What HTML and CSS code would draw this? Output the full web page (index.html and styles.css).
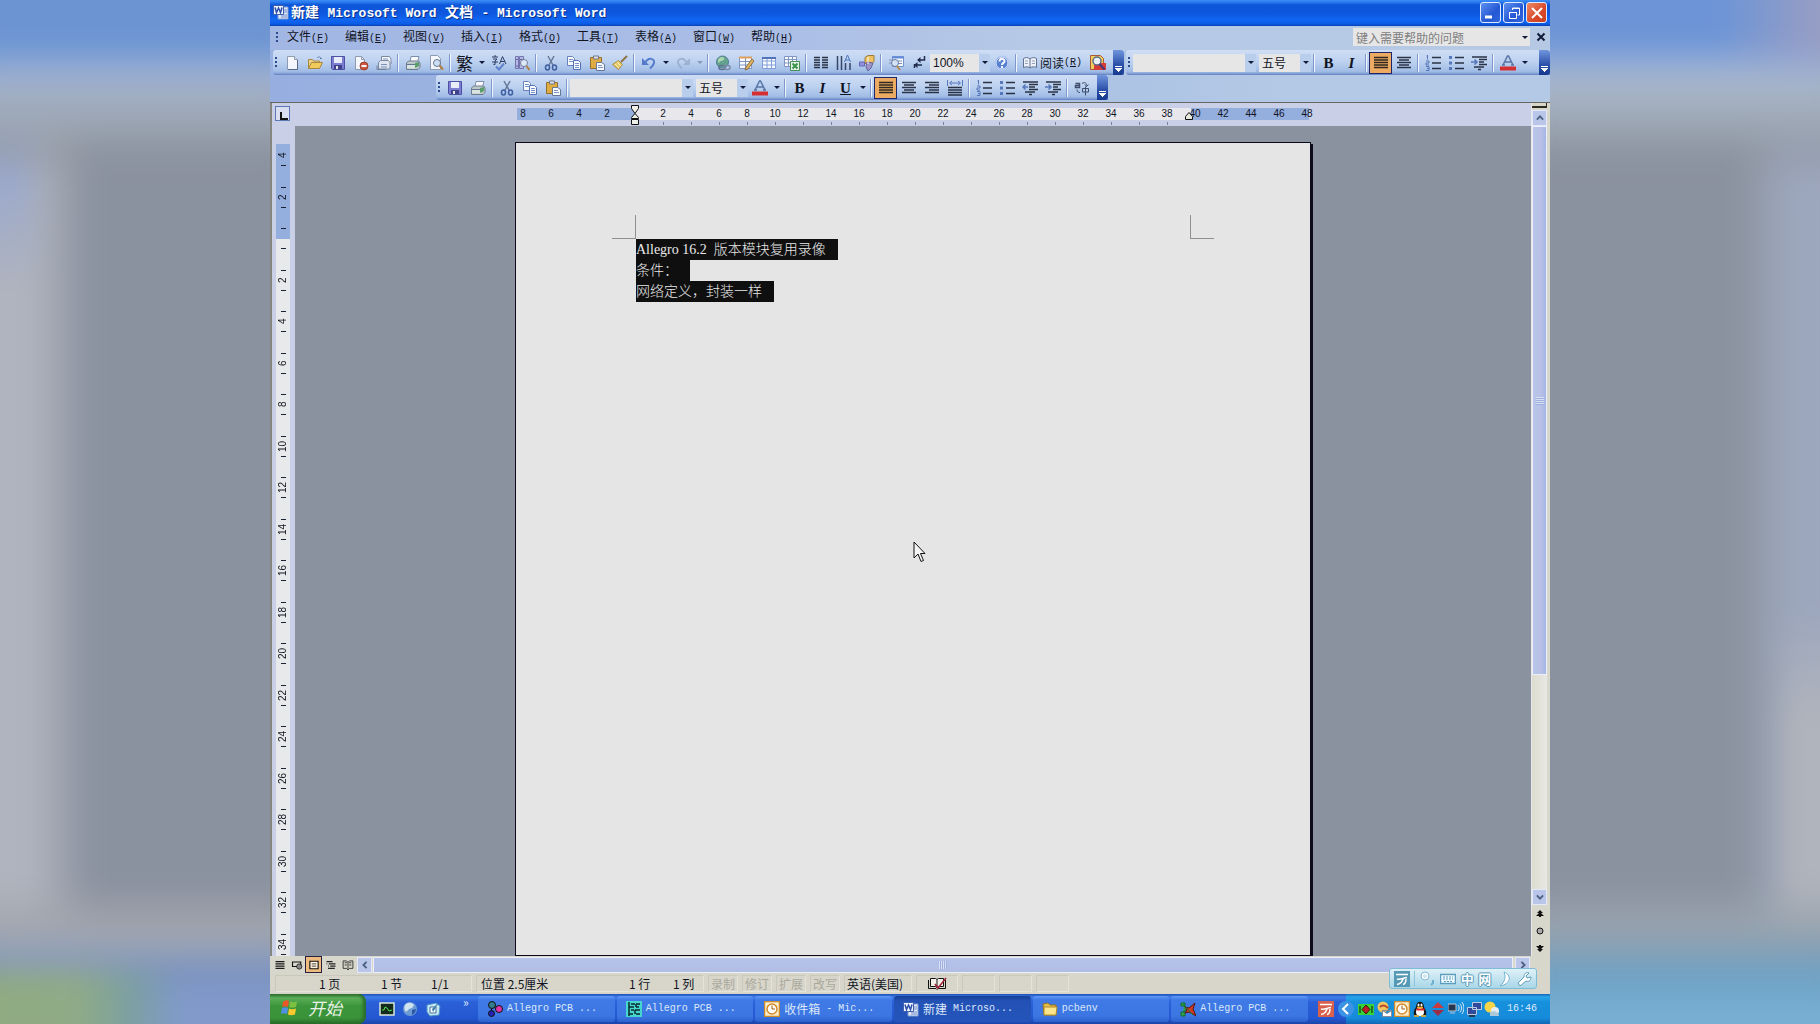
FILE: index.html
```html
<!DOCTYPE html>
<html lang="zh-CN">
<head>
<meta charset="utf-8">
<title>新建 Microsoft Word 文档 - Microsoft Word</title>
<link rel="stylesheet" href="styles.css">
</head>
<body>
<svg class="sprite" aria-hidden="true">
  <symbol id="word" viewBox="0 0 16 16"><path d="M5 3h10v12H5z" fill="#dfe7f8" stroke="#7f9bd0"/><path d="M11 6h3M11 8h3M8 11h6M8 13h6" stroke="#6f8cc8"/><path d="M.5 1.500h10v9H.5z" fill="#eef3ff" stroke="#3d5fae"/><path d="M2 3.500l1.500 5 2-4.500 2 4.500L9 3.500" fill="none" stroke="#2b4fa8" stroke-width="1.500"/></symbol>
  <symbol id="new" viewBox="0 0 16 16"><path d="M3.500 1.500h7l3 3v10h-10z" fill="#fbfcff" stroke="#8b95ab"/><path d="M10.500 1.500v3h3" fill="#dbe3f3" stroke="#8b95ab"/><path d="M13.500 5v9.500H4" fill="none" stroke="#515f7d"/></symbol>
  <symbol id="open" viewBox="0 0 16 16"><path d="M1.500 13.500v-9h4l1 1.500h6v2" fill="#f3d27a" stroke="#a5812e"/><path d="M1.500 13.500l3-6h11l-3 6z" fill="#f9c94c" stroke="#a5812e"/><path d="M10 3c2-2 4-1 4 1l1-1M14 4l-1-1" fill="none" stroke="#5778a5"/></symbol>
  <symbol id="save" viewBox="0 0 16 16"><path d="M1.500 1.500h13v13h-12l-1-1z" fill="#7677ce" stroke="#43429b"/><path d="M4 2h8v6H4z" fill="#edf0fc"/><path d="M4 10h8v4H4z" fill="#34357d"/><path d="M6 11h2v3H6z" fill="#eee"/></symbol>
  <symbol id="perm" viewBox="0 0 16 16"><path d="M2.500 1.500h6l3 3v10h-9z" fill="#fbfcff" stroke="#8b95ab"/><path d="M8.500 1.500v3h3" fill="none" stroke="#8b95ab"/><circle cx="11" cy="11" r="4" fill="#d34a2c" stroke="#9b321b"/><path d="M8.500 11h5" stroke="#fff" stroke-width="2"/></symbol>
  <symbol id="fax" viewBox="0 0 16 16"><path d="M5.500 7V1.500h8L15 4v5" fill="#fff" stroke="#74809a"/><path d="M2.500 14V7.500l2-2h8l1.500 2V14z" fill="#e3e8f2" stroke="#74809a"/><path d="M5 9.500h6M5 12h6M7 4h5" stroke="#7789b0"/><path d="M1 10.500v4h9" fill="none" stroke="#6b7892"/></symbol>
  <symbol id="print" viewBox="0 0 16 16"><path d="M5 7l1-5.500h8L12.500 7" fill="#fff" stroke="#7787a3"/><path d="M1.500 8l2-2h10l1.500 2v4.500l-2 2H1.500z" fill="#bfc8c8" stroke="#657486"/><path d="M2 10h9v3.500H2z" fill="#dfe8df"/><path d="M10 8l4-1v4l-4 2z" fill="#4f9b5e"/><path d="M2 9.500h8" stroke="#596d86"/></symbol>
  <symbol id="preview" viewBox="0 0 16 16"><path d="M2.500.5h7l3 3v11h-10z" fill="#fbfcff" stroke="#8b95ab"/><circle cx="9" cy="8" r="3.500" fill="#cfe1f5" stroke="#5e6e8a"/><path d="M11.500 10.500l3.500 4" stroke="#b2782e" stroke-width="2"/></symbol>
  <symbol id="spell" viewBox="0 0 16 16"><path d="M1 2h6M4 0v2M2 4h4L4 6v3.500H2.500M1 7h6" fill="none" stroke="#1c2b55"/><path d="M8.500 9L11.500 1.500 15 9M10 6.500h4" fill="none" stroke="#1c2b55"/><path d="M5 11.500l3 3 5-6" fill="none" stroke="#5779c5" stroke-width="2"/></symbol>
  <symbol id="research" viewBox="0 0 16 16"><path d="M1.500 1.500h3v12h-3zM5.500 1.500h4v12h-4z" fill="#b8b6e4" stroke="#6b6aa9"/><path d="M2 4.500h2M6 4.500h3M2 11h2" stroke="#5a5a99"/><circle cx="10" cy="8" r="3.500" fill="#e4edf9" stroke="#6b7892"/><path d="M12.500 11l3 4" stroke="#b2782e" stroke-width="2"/></symbol>
  <symbol id="cut" viewBox="0 0 16 16"><path d="M5 1l5.500 10M11 1L5.500 11" fill="none" stroke="#5d6f91" stroke-width="1.500"/><ellipse cx="4.500" cy="12.500" rx="2" ry="2.500" fill="none" stroke="#34559c" stroke-width="1.500"/><ellipse cx="11.500" cy="12.500" rx="2" ry="2.500" fill="none" stroke="#34559c" stroke-width="1.500"/></symbol>
  <symbol id="copy" viewBox="0 0 16 16"><path d="M1.500 1.500h5l2 2v7h-7z" fill="#fff" stroke="#6079b4"/><path d="M3 4.500h4M3 6.500h4" stroke="#6f8cc8"/><path d="M7.500 5.500h5l2 2v7h-7z" fill="#fff" stroke="#4868ad"/><path d="M9 8.500h4M9 10.500h4M9 12.500h4" stroke="#6f8cc8"/></symbol>
  <symbol id="paste" viewBox="0 0 16 16"><path d="M1.500 2.500h11v11h-11z" fill="#e3a92e" stroke="#8f661d"/><path d="M4.500 1h5v3h-5z" fill="#dfe1e8" stroke="#6c6c77"/><path d="M7.500 7.500h5l3 2v6h-8z" fill="#fff" stroke="#60708f"/><path d="M9 10.500h4M9 12.500h5" stroke="#7b8fbe"/></symbol>
  <symbol id="brush" viewBox="0 0 16 16"><path d="M15 1l-6 6" stroke="#8a6a36" stroke-width="2"/><path d="M6.500 5.500l4 4-4 5-6-5z" fill="#eecb56" stroke="#a88835"/><path d="M3 9l4 4M5 7l4 4" stroke="#fff2b8"/></symbol>
  <symbol id="undo" viewBox="0 0 16 16"><path d="M4 8c3-6 10-5 9 0-.5 2-2 4-4 5.500" fill="none" stroke="#4c72c9" stroke-width="2"/><path d="M1 3v7h7z" fill="#4c72c9"/></symbol>
  <symbol id="redo" viewBox="0 0 16 16"><path d="M12 8C9 2 2 3 3 8c.5 2 2 4 4 5.500" fill="none" stroke="#9bafd0" stroke-width="2"/><path d="M15 3v7H8z" fill="#9bafd0"/></symbol>
  <symbol id="link" viewBox="0 0 16 16"><circle cx="7.500" cy="7" r="6" fill="#5c9e83" stroke="#44748a"/><path d="M3 5c2-4 5-3 6-2s-1 3-3 3-1 3-3 1z" fill="#a9d8a9"/><rect x="4" y="10.500" width="6" height="4" rx="2" fill="none" stroke="#586a8c" stroke-width="1.500"/><rect x="9" y="10.500" width="6" height="4" rx="2" fill="none" stroke="#77859e" stroke-width="1.500"/></symbol>
  <symbol id="tblpen" viewBox="0 0 16 16"><path d="M1.500 2.500h12v11h-12zM1.500 6.500h12M1.500 10h12M7.500 2.500v11" fill="#fff" stroke="#7b8fbe"/><path d="M1 2.500h13" stroke="#e09a50" stroke-width="2"/><path d="M14 4l-6 8-1 3 3-1 6-8z" fill="#e6ae52" stroke="#8b682e"/></symbol>
  <symbol id="table" viewBox="0 0 16 16"><path d="M1.500 2.500h13v11h-13zM1.500 6h13M1.500 10h13M6 2.500v11M10.500 2.500v11" fill="#fff" stroke="#7d9ad8"/><path d="M1 3h14" stroke="#4668b5" stroke-width="2"/></symbol>
  <symbol id="excel" viewBox="0 0 16 16"><path d="M.5 1.500h12v10H.5zM.5 4.500h12M.5 8h12M4.500 1.500v10M8.500 1.500v10" fill="#fff" stroke="#7b8fbe"/><path d="M6.500 6.500h9v9h-9z" fill="#e9f7e9" stroke="#3d8a45"/><path d="M8.500 8.500l5 5M13.500 8.500l-5 5" stroke="#2d8f38" stroke-width="2"/></symbol>
  <symbol id="cols" viewBox="0 0 16 16"><path d="M1 2.500h6M1 5h6M1 7.500h6M1 10h6M1 12.500h6M9 2.500h6M9 5h6M9 7.500h6M9 10h6M9 12.500h6" stroke="#1b2233" stroke-width="1.500"/></symbol>
  <symbol id="tdir" viewBox="0 0 16 16"><path d="M1.500 1v14M5.500 1v14M9.500 8v7M14 8v7" stroke="#29375a" stroke-width="1.500" fill="none"/><path d="M8.500 7L11.500 0l3 7M9.500 5h4" stroke="#3f67b6" fill="none"/></symbol>
  <symbol id="draw" viewBox="0 0 16 16"><path d="M6 2.500l3-2h6v6l-2 2H6z" fill="#f0bf52" stroke="#9b7424"/><path d="M.5 7h5v4h-5z" fill="#8f8edb" stroke="#5b5aae"/><path d="M8 7l6 1-2 5-3 3-2-4z" fill="#9c8fc6" stroke="#5d568e"/><path d="M9 2v7" stroke="#fff"/></symbol>
  <symbol id="docmap" viewBox="0 0 16 16"><path d="M4.500 1.500h11v10h-11z" fill="#fff" stroke="#6c8bc9"/><path d="M4 2.500h12" stroke="#5a82d8" stroke-width="2"/><path d="M1 5h4M1 8h3M10 6h4M10 8.500h4" stroke="#7a8db2"/><circle cx="7" cy="8" r="3.500" fill="#d7e6f9" stroke="#5c6f93"/><path d="M9 11l3 4" stroke="#b98535" stroke-width="2"/></symbol>
  <symbol id="pilcrow" viewBox="0 0 16 16"><path d="M13.500 1v4H8M3.500 9v4M11 10H5" fill="none" stroke="#111a38" stroke-width="1.500"/><path d="M9.500 2L6 5l3.500 3zM6.500 7L3 10l3.500 3z" fill="#111a38"/></symbol>
  <symbol id="help" viewBox="0 0 16 16"><circle cx="8" cy="8" r="7" fill="#4f79cf" stroke="#b9ccf2"/><circle cx="8" cy="8" r="6" fill="none" stroke="#e7effe"/><path d="M5.500 6.500c0-4 5.500-3 5 0-.3 1.500-2.500 1.500-2.500 3.500M8 11v2" fill="none" stroke="#fff" stroke-width="2"/></symbol>
  <symbol id="book" viewBox="0 0 16 16"><path d="M8 4C6 2 3 2.500 1.500 3.500v9C4 11.500 6 11.500 8 13c2-1.500 4-1.500 6.500-.5v-9C13 2.500 10 2 8 4zM8 4v9" fill="#f4f6fb" stroke="#586784"/><path d="M3 6h3M3 8.500h3M10 6h3M10 8.500h3" stroke="#8d9ab3"/></symbol>
  <symbol id="acrobat" viewBox="0 0 16 16"><path d="M.5.5h10l3 3v11H.5z" fill="#f6cf4f" stroke="#a64c24"/><path d="M4 8h12v7H4z" fill="#d92e25"/><circle cx="7" cy="6" r="4" fill="#eef4fb" stroke="#53617c" stroke-width="1.500"/><path d="M9.500 9l5 5.500" stroke="#372a6f" stroke-width="2"/></symbol>
  <symbol id="fontcol" viewBox="0 0 16 16"><path d="M3 10L7.500 1h1L13 10M5 7h6M2 10h3M11 10h3" fill="none" stroke="#4e6b9f" stroke-width="1.500"/><path d="M0 11.500h16v4H0z" fill="#d9201f"/></symbol>
  <symbol id="justify" viewBox="0 0 16 16"><path d="M1 2.500h14M1 5h14M1 7.500h14M1 10h14M1 12.500h14" stroke="#1a1a1a" stroke-width="1.500"/></symbol>
  <symbol id="center" viewBox="0 0 16 16"><path d="M1 2.500h14M3 5h10M1 7.500h14M3 10h10M1 12.500h14" stroke="#1b2233" stroke-width="1.500"/></symbol>
  <symbol id="right" viewBox="0 0 16 16"><path d="M1 2.500h14M5 5h10M1 7.500h14M5 10h10M1 12.500h14" stroke="#1b2233" stroke-width="1.500"/></symbol>
  <symbol id="dist" viewBox="0 0 16 16"><path d="M1 7.500h14M1 10h14M1 12.500h14M1 15h14" stroke="#1b2233" stroke-width="1.500"/><path d="M.5 0v6M15.500 0v6M3 3h10M5 1L2.500 3 5 5M11 1l2.500 2L11 5" fill="none" stroke="#4c6eb5"/></symbol>
  <symbol id="nums" viewBox="0 0 16 16"><path d="M7 2.500h9M7 8h9M7 13.500h9" stroke="#1b2233" stroke-width="1.500"/><path d="M2.500 0v4.500M1.500 1h1M1 6h3v2H1v2h3M1 11.500h3v4H1M2 13.500h2" fill="none" stroke="#4c6eb5"/></symbol>
  <symbol id="bullets" viewBox="0 0 16 16"><path d="M7 2.500h9M7 8h9M7 13.500h9" stroke="#1b2233" stroke-width="1.500"/><path d="M1 1h3v3H1zM1 6.500h3v3H1zM1 12h3v3H1z" fill="#4c6eb5"/></symbol>
  <symbol id="outdent" viewBox="0 0 16 16"><path d="M1 2h15M7 4.500h9M7 7h6M7 9.500h9M3 12h10M7 14.500h3" stroke="#1b2233" stroke-width="1.500"/><path d="M6 7H1M3.500 4.500L1 7l2.500 2.500" fill="none" stroke="#4c6eb5" stroke-width="1.500"/></symbol>
  <symbol id="indent" viewBox="0 0 16 16"><path d="M1 2h15M8 4.500h8M8 7h5M8 9.500h8M3 12h10M7 14.500h3" stroke="#1b2233" stroke-width="1.500"/><path d="M0 7h5.500M3.500 4.500L6 7 3.500 9.500" fill="none" stroke="#4c6eb5" stroke-width="1.500"/></symbol>
  <symbol id="azh" viewBox="0 0 16 16"><path d="M1.500 3.500h4v4h-4v-2h4" fill="none" stroke="#33415f" stroke-width="1.500"/><path d="M8 3.500c3-2 5 0 4.500 2M11 4.500l1.500 2 2-2M8.500 8.500h6v3.500h-6zM11.500 6.500v9M3 9.500c0 2 1 3 3 3" fill="none" stroke="#33415f"/></symbol>
  <symbol id="bars" viewBox="0 0 16 16"><path d="M2 3.500h12M2 6.500h12M2 9.500h12M2 12.500h12" stroke="#1a1a1a" stroke-width="1.500"/></symbol>
  <symbol id="web" viewBox="0 0 16 16"><path d="M2 4h11v6H2z" fill="none" stroke="#111" stroke-width="1.500"/><circle cx="11" cy="10" r="3.500" fill="#888" stroke="#111"/></symbol>
  <symbol id="layout" viewBox="0 0 16 16"><path d="M2.500 3h11v10h-11z" fill="#fff4df" stroke="#111" stroke-width="1.500"/><path d="M5 6.500h6M5 9.500h6" stroke="#111"/></symbol>
  <symbol id="outline" viewBox="0 0 16 16"><path d="M2 3.500h8M5 6.500h9M7 9.500h7M4 12.500h9M2 6.500h1M4 9.500h1" stroke="#222" stroke-width="1.500"/></symbol>
  <symbol id="reader" viewBox="0 0 16 16"><path d="M8 4.500L6 2.500H1.500v10H6l2 2 2-2h4.500v-10H10zM8 4.500v10M3.500 5h3M3.500 8h3M9.500 5h3M9.500 8h3" fill="none" stroke="#111"/></symbol>
  <symbol id="bookcheck" viewBox="0 0 20 14"><path d="M1.500 3v8.500H9l1 1 1-1h7.500V3" fill="none" stroke="#111"/><path d="M3.500 1.500h5l1.500 1 1.500-1h5v8h-5l-1.500 1-1.500-1h-5z" fill="#f2f0e8" stroke="#111"/><path d="M10 3v7" stroke="#111"/><path d="M8 7l3 4 8-10" fill="none" stroke="#a3203c" stroke-width="1.500"/></symbol>
  <symbol id="chev" viewBox="0 0 16 16"><path d="M3 10.500l5-5 5 5" fill="none" stroke="#4d6185" stroke-width="3"/></symbol>
  <symbol id="flag" viewBox="0 0 20 20"><path d="M3 4c2-2 4-2 6-1L8 9C6 8 4 8 2 9z" fill="#e9572b"/><path d="M10 3.500c2 1 4 1 7 0L16 9c-3 1-5 1-7 0z" fill="#7cc142"/><path d="M2 10c2-1 4-1 6 0l-1 6c-2-1-4-1-6 0z" fill="#4f8fe6"/><path d="M9 10.500c2 1 4 1 7 0l-1 6c-3 1-5 1-7 0z" fill="#f8c92d"/></symbol>
  <symbol id="scope" viewBox="0 0 16 16"><path d="M1 2h14v12H1z" fill="#122b1a" stroke="#d7e7d7" stroke-width="1.500"/><path d="M3 9h2l1-3 2 1 2 3 3-1" fill="none" stroke="#52e05a"/></symbol>
  <symbol id="globe" viewBox="0 0 16 16"><circle cx="8" cy="8" r="7" fill="#6c9bd4"/><path d="M3 4c3-4 8-2 9 0l-2 3-3 1-3 3C2 9 2 6 3 4z" fill="#cfe3f1"/><path d="M10 9l4-1c0 3-2 5-4 6z" fill="#2b57a5"/></symbol>
  <symbol id="mailq" viewBox="0 0 16 16"><path d="M2 4l9-2 4 3-1 9-9 1-3-4z" fill="#c9e8f8" stroke="#4a94c4"/><path d="M5 6h6v6H5z" fill="#f7fcff" stroke="#3e7494"/><path d="M14 1L7 8l1 3 2-3z" fill="#407ea9"/></symbol>
  <symbol id="dots" viewBox="0 0 16 16"><path d="M5 4L4 13M5 4l7 4" stroke="#111"/><circle cx="5" cy="4" r="3.500" fill="#347d8b" stroke="#111"/><circle cx="12" cy="8" r="3.500" fill="#e137a4" stroke="#111"/><circle cx="4.500" cy="12.500" r="3" fill="#2622b5" stroke="#111"/></symbol>
  <symbol id="pcb" viewBox="0 0 16 16"><path d="M0 0h16v16H0z" fill="#45d6ce"/><path d="M3 1v14M5 3h4M3 6h5M5 9h3M3 13h4M10 3h4M10 6h3M9 9h5M10 13h4M10 3v3M9 9v4" fill="none" stroke="#09282d" stroke-width="1.500"/></symbol>
  <symbol id="clock" viewBox="0 0 16 16"><path d="M.5.5h15v15H.5z" fill="#fbeecb" stroke="#cf8c2a" stroke-width="1.500"/><circle cx="8" cy="8" r="5" fill="#fff" stroke="#d58b2a" stroke-width="1.500"/><path d="M8 4.500V8h3" fill="none" stroke="#a05e12"/></symbol>
  <symbol id="folder" viewBox="0 0 16 16"><path d="M1 3l5-1 2 2h6v10H2z" fill="#e6bd4b" stroke="#94721b"/><path d="M2 6h13l-1 8H2z" fill="#fbe58a" stroke="#b28c2b"/></symbol>
  <symbol id="bowtie" viewBox="0 0 16 16"><path d="M1 2h4v3H1zM1 11h4v4H1zM4 5l3 3-4 3" fill="#2ba84d" stroke="#17692c"/><path d="M5 6l4 1 6-5-2 6 3 7-7-4-4 1 2-3z" fill="#d13a22" stroke="#5c1410"/><path d="M3 3l10 11" stroke="#1d8038"/></symbol>
  <symbol id="wubi" viewBox="0 0 16 16"><path d="M0 0h16v16H0z" fill="currentColor"/><path d="M2 3.500h12M3 8c3 1 6-1 10-1.500M9 8c-1 3-3 5-6 5.500M12 8c0 4-1 5-3 5.500" fill="none" stroke="#fff" stroke-width="1.500"/></symbol>
  <symbol id="netg" viewBox="0 0 16 16"><path d="M0 3h16v11H0z" fill="#38d336"/><path d="M2 5v7M14 5v7" stroke="#111"/><path d="M8 4l4 4.500-4 4.500-4-4.500z" fill="#bd1b2a" stroke="#31230a"/></symbol>
  <symbol id="msg" viewBox="0 0 16 16"><circle cx="7" cy="6" r="5.500" fill="#f3c35e"/><path d="M4 6c3-3 6-1 8 1" stroke="#b8482b" fill="none" stroke-width="2"/><path d="M6.500 9.500h9v6h-9zM6.500 9.500l4.500 3 4.500-3" fill="#fff" stroke="#8a8a92"/></symbol>
  <symbol id="qq" viewBox="0 0 16 16"><path d="M2 14c-1-4 1-6 2-8 0-7 8-7 8 0 1 2 3 4 2 8z" fill="#17171f"/><ellipse cx="8" cy="11" rx="4" ry="4" fill="#fff"/><path d="M4 7.500h9l-1 2H5z" fill="#e02a22"/><ellipse cx="6.500" cy="4" rx="1" ry="1.500" fill="#fff"/><ellipse cx="9.500" cy="4" rx="1" ry="1.500" fill="#fff"/><path d="M5 6.500h6M2 15h5M9 15h5" stroke="#f4ad1d" stroke-width="1.500"/></symbol>
  <symbol id="updown" viewBox="0 0 16 16"><path d="M8 1l6 6H2z" fill="#c93a3f"/><path d="M8 15l6-6H2z" fill="#9c2f48"/></symbol>
  <symbol id="wifi" viewBox="0 0 16 16"><path d="M0 3h8v7H0zM2 12h5" fill="#26364f" stroke="#b5c6da"/><path d="M10 4c1.500 2 1.500 4 0 6M12 2.500c2 3 2 6 0 9M14 1c2.500 4 2.500 8 0 12" fill="none" stroke="#dceaf6"/></symbol>
  <symbol id="lan" viewBox="0 0 16 16"><path d="M6.500 1.500h9v7h-9zM1.500 6.500h9v7h-9z" fill="#324a9b" stroke="#bccbe0"/><path d="M3 15h6" stroke="#222" stroke-width="1.500"/></symbol>
  <symbol id="cloud" viewBox="0 0 16 16"><circle cx="6" cy="6" r="5.500" fill="#f8d548"/><circle cx="11" cy="10" r="4" fill="#e3edf4"/><path d="M6 11c4-2 9 0 9 4H6z" fill="#abc7da"/></symbol>
  <symbol id="kbd" viewBox="0 0 16 16"><path d="M.5 3.500h15v9H.5z" fill="#f1fbff" stroke="#5d9dbd" stroke-width="1.500"/><path d="M3 6h10M3 8h10M4 10.500h8" stroke="#5d9dbd" stroke-dasharray="2 1"/></symbol>
  <symbol id="moon" viewBox="0 0 16 16"><path d="M8 1c8 3 7 12-4 14 5-4 6-9 4-14z" fill="#fff" stroke="#6fb2d0"/></symbol>
  <symbol id="wrench" viewBox="0 0 16 16"><path d="M2 12l6-6c0-4 3-5 5-4l-3 3 1 2 4-1c0 4-3 5-5 4l-6 5z" fill="#fff" stroke="#5d9dbd"/></symbol>
  <symbol id="punct" viewBox="0 0 16 16"><circle cx="5" cy="5" r="3" fill="none" stroke="#fff" stroke-width="2"/><circle cx="5" cy="5" r="4" fill="none" stroke="#7fb9d3"/><path d="M13 9v3l-2 2" fill="none" stroke="#6fb2d0" stroke-width="2"/></symbol>
</svg>

<div class="desktop">
<div class="backdrop backdrop-left"></div>

<main class="window">
  <header class="titlebar">
    <svg class="icon"><use href="#word"/></svg>
    <h1 class="title"><span class="cn">新建</span> <span class="en">Microsoft Word</span> <span class="cn">文档</span> <span class="en">- Microsoft Word</span></h1>
    <button class="winbtn" aria-label="最小化"><svg class="icon" viewBox="0 0 16 16"><path d="M2 12h7" stroke="#fff" stroke-width="3"/></svg></button>
    <button class="winbtn" aria-label="还原"><svg class="icon" viewBox="0 0 16 16"><path d="M6.500 5V3h7v7h-2M6 3.500h8M3.500 7.500h7v6h-7zM3 7.500h8" fill="none" stroke="#fff"/></svg></button>
    <button class="winbtn close" aria-label="关闭"><svg class="icon" viewBox="0 0 16 16"><path d="M3 3l10 10M13 3L3 13" stroke="#fff" stroke-width="2"/></svg></button>
  </header>

  <nav class="menubar">
    <i class="grip"></i>
    <button class="menu">文件<span>(<u>F</u>)</span></button>
    <button class="menu">编辑<span>(<u>E</u>)</span></button>
    <button class="menu">视图<span>(<u>V</u>)</span></button>
    <button class="menu">插入<span>(<u>I</u>)</span></button>
    <button class="menu">格式<span>(<u>O</u>)</span></button>
    <button class="menu">工具<span>(<u>T</u>)</span></button>
    <button class="menu">表格<span>(<u>A</u>)</span></button>
    <button class="menu">窗口<span>(<u>W</u>)</span></button>
    <button class="menu">帮助<span>(<u>H</u>)</span></button>
    <div class="ask"><input type="text" aria-label="帮助" placeholder="键入需要帮助的问题"><button class="arrow" aria-label="展开"></button></div>
    <button class="closedoc" aria-label="关闭窗口"><svg viewBox="0 0 10 10"><path d="M1.500 1.500l7 7M8.500 1.500l-7 7" stroke="#111a38" stroke-width="2"/></svg></button>
  </nav>

  <div class="row">
    <div class="toolbar">
      <i class="grip"></i>
      <button class="tool" aria-label="新建"><svg class="icon"><use href="#new"/></svg></button>
      <button class="tool" aria-label="打开"><svg class="icon"><use href="#open"/></svg></button>
      <button class="tool" aria-label="保存"><svg class="icon"><use href="#save"/></svg></button>
      <button class="tool" aria-label="权限"><svg class="icon"><use href="#perm"/></svg></button>
      <button class="tool" aria-label="传真"><svg class="icon"><use href="#fax"/></svg></button>
      <i class="sep"></i>
      <button class="tool" aria-label="打印"><svg class="icon"><use href="#print"/></svg></button>
      <button class="tool" aria-label="打印预览"><svg class="icon"><use href="#preview"/></svg></button>
      <i class="sep"></i>
      <button class="tool trad">繁</button><button class="arrow" aria-label="展开"></button>
      <button class="tool" aria-label="拼写"><svg class="icon"><use href="#spell"/></svg></button>
      <button class="tool" aria-label="信息检索"><svg class="icon"><use href="#research"/></svg></button>
      <i class="sep"></i>
      <button class="tool" aria-label="剪切"><svg class="icon"><use href="#cut"/></svg></button>
      <button class="tool" aria-label="复制"><svg class="icon"><use href="#copy"/></svg></button>
      <button class="tool" aria-label="粘贴"><svg class="icon"><use href="#paste"/></svg></button>
      <button class="tool" aria-label="格式刷"><svg class="icon"><use href="#brush"/></svg></button>
      <i class="sep"></i>
      <button class="tool" aria-label="撤销"><svg class="icon"><use href="#undo"/></svg></button><button class="arrow" aria-label="展开"></button>
      <button class="tool" aria-label="恢复"><svg class="icon"><use href="#redo"/></svg></button><button class="arrow dim" aria-label="展开"></button>
      <i class="sep"></i>
      <button class="tool" aria-label="超链接"><svg class="icon"><use href="#link"/></svg></button>
      <button class="tool" aria-label="表格和边框"><svg class="icon"><use href="#tblpen"/></svg></button>
      <button class="tool" aria-label="插入表格"><svg class="icon"><use href="#table"/></svg></button>
      <button class="tool" aria-label="插入工作表"><svg class="icon"><use href="#excel"/></svg></button>
      <i class="sep"></i>
      <button class="tool" aria-label="分栏"><svg class="icon"><use href="#cols"/></svg></button>
      <button class="tool" aria-label="文字方向"><svg class="icon"><use href="#tdir"/></svg></button>
      <button class="tool" aria-label="绘图"><svg class="icon"><use href="#draw"/></svg></button>
      <i class="sep"></i>
      <button class="tool" aria-label="文档结构图"><svg class="icon"><use href="#docmap"/></svg></button>
      <button class="tool" aria-label="编辑标记"><svg class="icon"><use href="#pilcrow"/></svg></button>
      <div class="combo zoom"><select aria-label="显示比例"><option>100%</option></select><i class="arrow"></i></div>
      <button class="tool" aria-label="帮助"><svg class="icon"><use href="#help"/></svg></button>
      <i class="sep"></i>
      <button class="read"><svg class="icon"><use href="#book"/></svg>阅读<span>(<u>R</u>)</span></button>
      <button class="tool" aria-label="检索"><svg class="icon"><use href="#acrobat"/></svg></button>
      <button class="cap" aria-label="工具栏选项"></button>
    </div>
    <div class="toolbar grow">
      <i class="grip"></i>
      <div class="combo font"><select aria-label="字体"><option></option></select><i class="arrow"></i></div>
      <div class="combo size"><select aria-label="字号"><option>五号</option></select><i class="arrow"></i></div>
      <i class="sep"></i>
      <button class="tool letter">B</button>
      <button class="tool letter italic">I</button>
      <i class="sep"></i>
      <button class="tool active" aria-label="两端对齐"><svg class="icon"><use href="#justify"/></svg></button>
      <button class="tool" aria-label="居中"><svg class="icon"><use href="#center"/></svg></button>
      <i class="sep"></i>
      <button class="tool" aria-label="编号"><svg class="icon"><use href="#nums"/></svg></button>
      <button class="tool" aria-label="项目符号"><svg class="icon"><use href="#bullets"/></svg></button>
      <button class="tool" aria-label="增加缩进"><svg class="icon"><use href="#indent"/></svg></button>
      <i class="sep"></i>
      <button class="tool" aria-label="字体颜色"><svg class="icon"><use href="#fontcol"/></svg></button><button class="arrow" aria-label="展开"></button>
      <button class="cap more" aria-label="更多按钮"></button>
    </div>
  </div>

  <div class="row second">
    <div class="toolbar">
      <i class="grip"></i>
      <button class="tool" aria-label="保存"><svg class="icon"><use href="#save"/></svg></button>
      <button class="tool" aria-label="打印"><svg class="icon"><use href="#print"/></svg></button>
      <i class="sep"></i>
      <button class="tool" aria-label="剪切"><svg class="icon"><use href="#cut"/></svg></button>
      <button class="tool" aria-label="复制"><svg class="icon"><use href="#copy"/></svg></button>
      <button class="tool" aria-label="粘贴"><svg class="icon"><use href="#paste"/></svg></button>
      <i class="sep"></i>
      <div class="combo font"><select aria-label="字体"><option></option></select><i class="arrow"></i></div>
      <div class="combo size"><select aria-label="字号"><option>五号</option></select><i class="arrow"></i></div>
      <button class="tool" aria-label="字体颜色"><svg class="icon"><use href="#fontcol"/></svg></button><button class="arrow" aria-label="展开"></button>
      <i class="sep"></i>
      <button class="tool letter">B</button>
      <button class="tool letter italic">I</button>
      <button class="tool letter under">U</button><button class="arrow" aria-label="展开"></button>
      <i class="sep"></i>
      <button class="tool active" aria-label="两端对齐"><svg class="icon"><use href="#justify"/></svg></button>
      <button class="tool" aria-label="居中"><svg class="icon"><use href="#center"/></svg></button>
      <button class="tool" aria-label="右对齐"><svg class="icon"><use href="#right"/></svg></button>
      <button class="tool" aria-label="分散对齐"><svg class="icon"><use href="#dist"/></svg></button>
      <i class="sep"></i>
      <button class="tool" aria-label="编号"><svg class="icon"><use href="#nums"/></svg></button>
      <button class="tool" aria-label="项目符号"><svg class="icon"><use href="#bullets"/></svg></button>
      <button class="tool" aria-label="减少缩进"><svg class="icon"><use href="#outdent"/></svg></button>
      <button class="tool" aria-label="增加缩进"><svg class="icon"><use href="#indent"/></svg></button>
      <i class="sep"></i>
      <button class="tool" aria-label="中文版式"><svg class="icon"><use href="#azh"/></svg></button>
      <button class="cap" aria-label="工具栏选项"></button>
    </div>
  </div>

  <section class="workspace">
    <div class="corner"><button class="tabstop" aria-label="制表符"></button></div>
    <div class="hruler">
      <ol class="hscale">
        <li>8</li><li>6</li><li>4</li><li>2</li><li class="zero"><svg viewBox="0 0 10 22"><path d="M1.500 1.500h7v3l-3.500 5-3.500-5zM1.500 14.500v-1l3.500-4 3.500 4v1zM1.500 15.500h7v5h-7z" fill="#eef0e8" stroke="#111"/></svg></li>
        <li class="on">2</li><li class="on">4</li><li class="on">6</li><li class="on">8</li><li class="on">10</li><li class="on">12</li><li class="on">14</li><li class="on">16</li><li class="on">18</li><li class="on">20</li><li class="on">22</li><li class="on">24</li><li class="on">26</li><li class="on">28</li><li class="on">30</li><li class="on">32</li><li class="on">34</li><li class="on">36</li><li class="on">38</li>
        <li class="edge"><svg viewBox="0 0 10 9"><path d="M1.500 8.500v-3l3.500-4 3.500 4v3z" fill="#e4e8dc" stroke="#111"/></svg>40</li><li>42</li><li>44</li><li>46</li><li>48</li>
      </ol>
    </div>
    <div class="vruler">
      <ol class="vscale">
        <li><span>4</span></li><li><span>2</span></li><li><span></span></li><li><span>2</span></li><li><span>4</span></li><li><span>6</span></li><li><span>8</span></li><li><span>10</span></li><li><span>12</span></li><li><span>14</span></li><li><span>16</span></li><li><span>18</span></li><li><span>20</span></li><li><span>22</span></li><li><span>24</span></li><li><span>26</span></li><li><span>28</span></li><li><span>30</span></li><li><span>32</span></li><li><span>34</span></li>
      </ol>
    </div>
    <div class="viewport">
      <article class="page">
        <div class="marks"><i class="mark-left"></i><i class="mark-right"></i></div>
        <p><mark>Allegro 16.2  版本模块复用录像</mark></p>
        <p><mark>条件：</mark></p>
        <p><mark>网络定义，封装一样</mark></p>
      </article>
      <svg class="cursor" viewBox="0 0 13 22"><path d="M1 1v16l4-4 3 7.500 2.500-1-3-7H12z" fill="#f4f4f4" stroke="#111"/></svg>
    </div>
    <div class="vscroll">
      <i class="split"></i>
      <button class="sbtn" aria-label="向上"><svg><use href="#chev"/></svg></button>
      <div class="vtrack"><i class="vthumb"></i></div>
      <button class="sbtn down" aria-label="向下"><svg><use href="#chev"/></svg></button>
      <div class="browse">
        <button aria-label="前一页"><svg viewBox="0 0 8 8"><path d="M4 0l3 3H5l3 3H5v1H3V6H0l3-3H1z" fill="#111"/></svg></button>
        <button aria-label="选择浏览对象"><svg viewBox="0 0 8 8"><circle cx="4" cy="4" r="3" fill="#aaa" stroke="#111"/></svg></button>
        <button aria-label="下一页"><svg viewBox="0 0 8 8"><path d="M4 8L1 5h2L0 2h3V1h2v1h3L5 5h2z" fill="#111"/></svg></button>
      </div>
    </div>
  </section>

  <div class="viewrow">
    <button class="view" aria-label="普通视图"><svg><use href="#bars"/></svg></button>
    <button class="view" aria-label="Web 版式"><svg><use href="#web"/></svg></button>
    <button class="view active" aria-label="页面视图"><svg><use href="#layout"/></svg></button>
    <button class="view" aria-label="大纲视图"><svg><use href="#outline"/></svg></button>
    <button class="view" aria-label="阅读版式"><svg><use href="#reader"/></svg></button>
    <button class="sbtn left" aria-label="向左"><svg><use href="#chev"/></svg></button>
    <div class="hthumb"></div>
    <button class="sbtn rightward" aria-label="向右"><svg><use href="#chev"/></svg></button>
  </div>

  <footer class="status">
    <div class="cell pages"><span>1 页</span><span>1 节</span><span>1/1</span></div>
    <div class="cell place"><span>位置 2.5厘米</span><span>1 行</span><span>1 列</span></div>
    <div class="cell off">录制</div><div class="cell off">修订</div><div class="cell off">扩展</div><div class="cell off">改写</div>
    <div class="cell lang">英语(美国)</div>
    <div class="cell proof"><svg><use href="#bookcheck"/></svg></div>
    <div class="cell blank"></div><div class="cell blank"></div><div class="cell blank"></div>
  </footer>

  <div class="ime">
    <svg class="icon"><use href="#wubi"/></svg><i class="imesep"></i>
    <svg class="icon"><use href="#punct"/></svg><svg class="icon"><use href="#kbd"/></svg>
    <span>中</span><span>网</span>
    <svg class="icon"><use href="#moon"/></svg><svg class="icon"><use href="#wrench"/></svg>
  </div>

  <nav class="taskbar">
    <button class="start"><svg><use href="#flag"/></svg>开始</button>
    <div class="quick">
      <svg class="icon"><use href="#scope"/></svg><svg class="icon"><use href="#globe"/></svg><svg class="icon"><use href="#mailq"/></svg><span>»</span>
    </div>
    <div class="tasks">
      <button class="task"><svg class="icon"><use href="#dots"/></svg><span class="en">Allegro PCB ...</span></button>
      <button class="task"><svg class="icon"><use href="#pcb"/></svg><span class="en">Allegro PCB ...</span></button>
      <button class="task"><svg class="icon"><use href="#clock"/></svg>收件箱<span class="en"> - Mic...</span></button>
      <button class="task current"><svg class="icon"><use href="#word"/></svg>新建<span class="en"> Microso...</span></button>
      <button class="task"><svg class="icon"><use href="#folder"/></svg><span class="en">pcbenv</span></button>
      <button class="task"><svg class="icon"><use href="#bowtie"/></svg><span class="en">Allegro PCB ...</span></button>
    </div>
    <div class="langbar"><svg class="icon"><use href="#wubi"/></svg></div>
    <div class="tray">
      <button class="expand" aria-label="显示隐藏图标"><svg viewBox="0 0 16 16"><path d="M10 3L5 8l5 5" fill="none" stroke="#fff" stroke-width="2"/></svg></button>
      <svg class="icon"><use href="#netg"/></svg><svg class="icon"><use href="#msg"/></svg><svg class="icon"><use href="#clock"/></svg><svg class="icon"><use href="#qq"/></svg><svg class="icon"><use href="#updown"/></svg><svg class="icon"><use href="#wifi"/></svg><svg class="icon"><use href="#lan"/></svg><svg class="icon"><use href="#cloud"/></svg>
      <time class="en">16:46</time>
    </div>
  </nav>
</main>

<div class="backdrop backdrop-right"></div>
</div>
</body>
</html>
```
FILE: styles.css
```css
* { box-sizing: border-box; }
body {
  margin: 0;
  font: 12px/16px "Noto Sans CJK SC", "Liberation Sans", sans-serif;
  color: #10141f;
  background: #8a919f;
}
button, input, select { font: inherit; color: inherit; margin: 0; padding: 0; border: 0; background: none; border-radius: 0; }
ol { list-style: none; margin: 0; padding: 0; }
i { font-style: normal; flex: none; }
svg { display: block; flex: none; }
.sprite { position: absolute; width: 0; height: 0; }
.icon { width: 16px; height: 16px; }
.en { font-family: "Liberation Mono", monospace; font-size: 10px; white-space: pre; }

.desktop { display: grid; grid-template-columns: 270px minmax(0, 1fr) 270px; min-height: 100vh; }

/* soft wallpaper either side of the window */
.backdrop { position: relative; overflow: hidden; background: #8a919f; }
.backdrop::before { content: ""; position: absolute; inset: -30px; filter: blur(14px); }
.backdrop-left::before {
  background:
    linear-gradient(90deg, #8fab80 0, #8fab87 110px, #7c9fa0 160px, rgba(120, 147, 190, 0) 210px) 0 100% / 100% 84px no-repeat,
    linear-gradient(180deg, #6c94d2 80px, #90abd8 92px, #a3b0c6 120px, #9ca6b3 150px, rgba(143, 149, 160, .5) 185px, rgba(138, 145, 159, 0) 210px) 0 0 / 100% 230px no-repeat,
    linear-gradient(180deg, rgba(162, 166, 173, 0) 0, #a2a6ad 45px, #9ca5b5 58px, #7890c0 90px, #819acb 110px) 0 100% / 100% 170px no-repeat,
    linear-gradient(180deg, #9ba9cc 210px, rgba(155, 169, 204, 0) 320px) 0 0 / 64px 100% no-repeat,
    linear-gradient(90deg, #b0b4be 0, #b0b4be 62px, #9fa5b0 88px, #8a919f 122px);
}
.backdrop-right::before {
  background:
    linear-gradient(270deg, #989ec4 30px, rgba(152, 158, 196, 0) 130px) 0 0 / 100% 90px no-repeat,
    linear-gradient(180deg, #6c94d6 75px, #96aed8 92px, #aab6c6 120px, #9ba5b2 155px, rgba(143, 149, 160, .5) 185px, rgba(138, 145, 159, 0) 210px) 0 0 / 100% 230px no-repeat,
    linear-gradient(180deg, rgba(154, 164, 174, 0) 0, #9aa4ae 45px, #7f9fb8 70px, #6ca3c8 100px, #7ab0d4 130px) 0 100% / 100% 170px no-repeat,
    linear-gradient(180deg, rgba(176, 180, 188, 0) 640px, #b0b4bc 750px) 100% 0 / 70px 100% no-repeat,
    linear-gradient(270deg, #9da7be 0, #9ca6bc 66px, #949dab 90px, #8a919f 112px);
}

.window { position: relative; display: flex; flex-direction: column; min-width: 0; height: 100vh; background: #d8d6ca; }

.titlebar { display: flex; align-items: center; height: 26px; flex: none; padding: 0 3px 2px 3px; gap: 2px; background: linear-gradient(180deg, #3c8df5 0, #2a7cf0 2px, #0d55d8 5px, #0d58e0 14px, #1167f2 20px, #0b5ae4 24px, #0841b0 26px); }
.title { flex: 1; margin: 0; font: bold 14px/18px "Liberation Mono", monospace; color: #fff; text-shadow: 1px 1px 0 #0a2f8a; white-space: nowrap; }
.title .cn { font-family: "Noto Sans CJK SC", sans-serif; }
.title .en { font-size: 13px; }
.winbtn { display: flex; align-items: center; justify-content: center; width: 21px; height: 21px; margin-top: 1px; border: 1px solid #dfe9fb; border-radius: 3px; background: linear-gradient(135deg, #5f90f0, #2458d4 60%, #2f66dc); }
.close { background: linear-gradient(135deg, #ec8a66, #d8492a 60%, #c8401f); }

.menubar { display: flex; align-items: center; height: 24px; flex: none; padding: 0 4px 2px 4px; background: linear-gradient(90deg, #a2b6e4 0, #abbee6 40%, #b6c9e6 60%, #b6c9e4 100%); }
.grip { width: 7px; height: 13px; background: linear-gradient(#2d4a8c 2px, transparent 2px) 2px 1px / 2px 4px repeat-y; background-clip: content-box; padding-right: 3px; }
.menubar .grip { margin-right: 6px; }
.menu { width: 58px; text-align: left; white-space: nowrap; }
.menu span, .read span { font-family: "Liberation Mono", monospace; font-size: 10px; }
.ask { display: flex; align-items: center; width: 177px; height: 18px; margin-left: auto; background: #e6e6e6; }
.ask input { flex: 1; min-width: 0; height: 18px; padding-left: 3px; background: #e6e6e6; }
.ask input::placeholder { color: #7e7e80; opacity: 1; }
.closedoc { padding: 5px 0 5px 6px; }
.closedoc svg { width: 10px; height: 10px; }

.row { display: flex; height: 25px; flex: none; padding-left: 3px; gap: 2px; background: linear-gradient(90deg, #9ab2e2, #b3c8e6 70%); }
.second { height: 27px; padding-left: 166px; background: linear-gradient(90deg, #97afe0, #a3b9e2 40%, #b3c9e5 80%); }
.toolbar { display: flex; align-items: center; height: 25px; border-radius: 3px 0 0 3px; background: linear-gradient(180deg, #cfddf5 0, #bdd2f0 45%, #a2bde6 85%, #8fabdb 23px, #5f7fc0 25px); }
.grow { flex: 1; min-width: 0; }
.tool { display: flex; align-items: center; justify-content: center; width: 23px; height: 22px; flex: none; }
.toolbar .icon { opacity: .9; }
.trad { font-size: 17px; line-height: 22px; }
.active { background: #edaa62; border: 1px solid #1d2668; }
.letter { font: bold 15px/20px "Liberation Serif", serif; }
.italic { font-style: italic; }
.under { text-decoration: underline; }
.sep { width: 6px; height: 18px; background: linear-gradient(90deg, transparent 2px, #7f97cb 2px, #7f97cb 3px, #f0f4fb 3px, #f0f4fb 4px, transparent 4px); }
.arrow { display: flex; align-items: center; justify-content: center; width: 11px; height: 18px; flex: none; }
.arrow::before { content: ""; border: 3px solid transparent; border-top-color: #111a38; border-bottom: 0; }
.dim::before { border-top-color: #8799bd; }
.combo { display: flex; align-items: center; height: 18px; background: #e6e6e6; }
.combo select { flex: 1; min-width: 0; height: 18px; padding: 0 3px; appearance: none; line-height: 16px; }
.combo .arrow { background: #b9cdec; }
.zoom { width: 60px; font-family: "Liberation Sans", sans-serif; }
.font { width: 123px; margin-right: 3px; }
.size { width: 52px; }
.read { display: flex; align-items: center; width: 67px; padding-left: 3px; }
.read .icon { margin-right: 2px; }
.cap { width: 11px; height: 25px; margin-left: 4px; border-radius: 0 3px 3px 0; background: linear-gradient(180deg, #7196dd, #2a4fa8 60%, #173a90); display: flex; align-items: flex-end; justify-content: center; padding-bottom: 3px; }
.cap::before { content: ""; width: 7px; height: 6px; background: linear-gradient(#fff, #fff) 0 0 / 7px 1px no-repeat, conic-gradient(from 315deg at 50% 100%, #fff 90deg, transparent 0) 0 2px / 7px 4px no-repeat; }
.more { margin-left: auto; }

.workspace { flex: 1; min-height: 0; display: grid; grid-template-columns: 25px minmax(0, 1fr) 19px; grid-template-rows: 23px minmax(0, 1fr); border-top: 1px solid #66675f; background: #c8cfe6; }
.corner { padding: 3px 0 0 3px; border-left: 2px solid #85867f; }
.tabstop { display: flex; width: 15px; height: 15px; border: 1px solid #5d76b4; padding: 5px 0 0 4px; background: #d9def0; }
.tabstop::before { content: ""; width: 6px; height: 6px; border: solid #111; border-width: 0 0 2px 2px; }
.hruler { display: flex; justify-content: center; padding-top: 5px; }
.hscale { display: flex; width: 792px; height: 12px; flex: none; font: 10px/12px "Liberation Sans", sans-serif; background: linear-gradient(90deg, #94aede 118px, #e8e8ec 118px, #e8e8ec 674px, #94aede 674px); }
.hscale li { position: relative; width: 28px; flex: none; text-align: center; }
.hscale li:first-child { margin-left: -8px; }
.hscale .on::after { content: ""; position: absolute; left: 14px; top: 14px; width: 1px; height: 3px; background: #7c849c; }
.hscale svg { position: absolute; width: 10px; left: 9px; }
.zero svg { height: 22px; top: -4px; }
.hscale .edge svg { height: 9px; top: 3px; left: 3px; }

.vruler { padding: 18px 5px 0 4px; overflow: hidden; border-left: 2px solid #85867f; }
.vscale { width: 14px; height: 100%; overflow: hidden; font: 10px/14px "Liberation Sans", sans-serif; background: linear-gradient(180deg, #94aede 95px, #e8e9ea 95px); }
.vscale li { display: flex; flex-direction: column; align-items: center; justify-content: flex-end; gap: 4px; height: 41px; padding-bottom: 10px; overflow: hidden; }
.vscale li:nth-child(even) { height: 42px; }
.vscale li:first-child { height: 32px; }
.vscale li:first-child::before { display: none; }
.vscale li::before, .vscale li::after { content: ""; width: 5px; height: 1px; background: #1b2233; flex: none; }
.vscale span { width: 14px; height: 11px; flex: none; writing-mode: vertical-rl; transform: rotate(180deg); text-align: center; }

.viewport { position: relative; overflow: hidden; padding-top: 16px; background: #8a919f; }
.page { width: 796px; height: 100%; margin: 0 auto; padding-top: 72px; background: #e5e5e5; border: 1px solid #0c0c1c; box-shadow: 2px 2px 0 #0c0c1c; }
.marks { display: flex; justify-content: space-between; padding: 0 96px; height: 24px; }
.marks i { width: 24px; height: 24px; border-bottom: 1px solid #909090; }
.mark-left { border-right: 1px solid #909090; }
.mark-right { border-left: 1px solid #909090; }
.page p { margin: 0 120px; height: 21px; font: 14px/21px "Liberation Serif", "Noto Sans CJK SC", serif; font-weight: 300; white-space: pre; }
.page mark { display: inline-block; height: 21px; padding-right: 12px; color: #e8e8e8; background: #0f0f0f; }
.cursor { position: absolute; left: 50%; top: 50%; width: 13px; height: 22px; }

.vscroll { grid-column: 3; grid-row: 1 / 3; display: flex; flex-direction: column; padding: 0 3px 0 0; background: #d8d7cc; border-left: 1px solid #e8e8ea; }
.split { height: 5px; margin: 0 0 2px; border: solid #2b2b22; border-width: 0 1px 2px 0; background: #d8d6c8; }
.sbtn { display: flex; align-items: center; justify-content: center; width: 15px; height: 16px; flex: none; border: 1px solid #e4e9fa; background: #b9c6ea; }
.sbtn svg { width: 10px; height: 10px; }
.down svg { transform: rotate(180deg); }
.left svg { transform: rotate(-90deg); }
.rightward svg { transform: rotate(90deg); }
.vtrack { flex: 1; width: 15px; background: linear-gradient(90deg, #dcdccf, #e8e8e4); }
.vthumb { display: flex; height: 72%; border: 1px solid #eceffa; background: repeating-linear-gradient(#d9e0f6 0 1px, #9fb0dc 1px 2px) center / 8px 8px no-repeat, linear-gradient(90deg, #b7c5e8, #b9c0e6 60%, #a4b6e4); }
.browse { display: flex; flex-direction: column; align-items: center; justify-content: space-around; height: 51px; }
.browse svg { width: 8px; height: 8px; }

.viewrow { display: flex; align-items: center; height: 18px; flex: none; padding: 0 20px 1px 1px; background: #d8d7cc; }
.view { display: flex; align-items: center; justify-content: center; width: 17px; height: 17px; }
.view svg { width: 12px; height: 12px; }
.view.active { background: #edbb7d; border: 1px solid #2a1f3e; }
.left { margin-left: 1px; }
.hthumb { flex: 1; height: 16px; margin: 0 2px 0 1px; border: 1px solid #eceffa; background: repeating-linear-gradient(90deg, #d9e0f6 0 1px, #9fb0dc 1px 2px) center / 8px 8px no-repeat, linear-gradient(#b4c3ea, #b2bde4); }

.status { display: flex; align-items: center; height: 20px; flex: none; padding: 0 0 1px 5px; gap: 4px; white-space: nowrap; background: #d8d6ca; }
.cell { display: flex; align-items: center; height: 17px; border: 1px solid #cac8bb; border-right-color: #e4e3da; border-bottom-color: #e4e3da; }
.pages { width: 197px; padding-left: 43px; }
.pages span { width: 62px; flex: none; }
.pages span:nth-child(2) { width: 50px; }
.pages span:nth-child(3) { width: auto; }
.place { width: 228px; padding-left: 4px; }
.place span { width: 44px; flex: none; }
.place span:first-child { width: 148px; }
.place span:nth-child(3) { width: auto; }
.off { width: 30px; padding-left: 2px; color: #a9a89d; }
.lang { width: 68px; padding-left: 2px; }
.proof { width: 42px; justify-content: center; }
.proof svg { width: 20px; height: 14px; }
.blank { width: 33px; }

.ime { position: absolute; right: 13px; bottom: 35px; display: flex; align-items: center; justify-content: space-between; width: 148px; height: 21px; padding: 0 4px; border: 1px solid #7fbdd6; border-radius: 3px; background: linear-gradient(#dff1f8, #a9d7e8); color: #5599b5; }
.ime span { font-size: 13px; font-weight: bold; color: #fff; text-shadow: 1px 0 #5599b5, -1px 0 #5599b5, 0 1px #5599b5, 0 -1px #5599b5; }
.imesep { width: 1px; height: 15px; background: #8cc4da; }

.taskbar { display: flex; height: 30px; flex: none; background: linear-gradient(180deg, #1f4fb5 0, #3f7eea 3px, #2a60d8 8px, #2458d2 24px, #1a44a8 30px); color: #dce8fa; }
.start { display: flex; align-items: center; gap: 8px; width: 96px; padding: 0 0 2px 10px; border-radius: 0 8px 8px 0; background: linear-gradient(180deg, #2d6f2c 0, #5cad58 4px, #3b953b 12px, #3a9239 24px, #276b28 30px); box-shadow: inset -3px 0 3px #2a6e2c; color: #e9f3e6; font-size: 17px; line-height: 24px; font-style: italic; }
.start svg { width: 20px; height: 20px; }
.quick { display: flex; align-items: center; gap: 7px; width: 112px; padding-left: 13px; }
.quick span { margin-left: 15px; align-self: flex-start; }
.tasks { flex: 1; min-width: 0; display: flex; gap: 2px; padding: 2px 0; }
.task { display: flex; flex: 1; min-width: 0; align-items: center; padding-left: 9px; border-radius: 3px; background: linear-gradient(180deg, #5f97f4 0, #3f7ae6 4px, #3c76e2 20px, #2c62ce 26px); white-space: pre; overflow: hidden; }
.task .icon { margin-right: 4px; }
.task.current { background: linear-gradient(180deg, #173f95, #2352b6 5px, #2554ba 26px); }
.langbar { display: flex; align-items: center; width: 38px; padding-left: 10px; color: #d9604a; }
.tray { display: flex; align-items: center; gap: 2px; width: 204px; padding-right: 13px; background: linear-gradient(180deg, #1568b8 0, #28a4ea 3px, #1690dc 8px, #168bdb 24px, #1067b4 30px); }
.expand { width: 16px; height: 16px; margin-left: -8px; margin-right: 2px; border-radius: 50%; background: #3a93e4; }
.expand svg { width: 16px; height: 16px; }
.tray time { margin-left: auto; }
```
